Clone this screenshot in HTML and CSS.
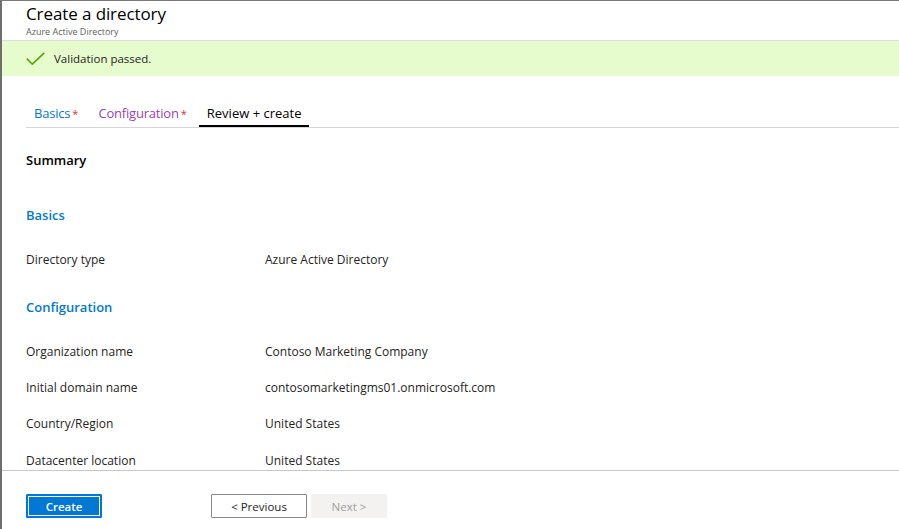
FILE: index.html
```html
<!DOCTYPE html>
<html>
<head>
<meta charset="utf-8">
<link rel="stylesheet" href="styles.css">
</head>
<body>
<div class="frame">
  <header class="header">
    <h1 class="title">Create a directory</h1>
    <div class="subtitle">Azure Active Directory</div>
  </header>
  <div class="banner">
    <svg class="check" width="19" height="14" viewBox="0 0 19 14"><path d="M0.8 6.6 L6.3 12.2 L18.3 0.8" fill="none" stroke="#57a300" stroke-width="1.6"/></svg>
    <span>Validation passed.</span>
  </div>
  <nav class="tabs">
    <a class="tab tab-basics">Basics<span class="star">*</span></a>
    <a class="tab tab-config">Configuration<span class="star">*</span></a>
    <a class="tab tab-active">Review + create</a>
  </nav>
  <main class="content">
    <h2 class="summary">Summary</h2>
    <h3 class="section">Basics</h3>
    <div class="row"><div class="label">Directory type</div><div class="value">Azure Active Directory</div></div>
    <h3 class="section section-config">Configuration</h3>
    <div class="row"><div class="label">Organization name</div><div class="value">Contoso Marketing Company</div></div>
    <div class="row"><div class="label">Initial domain name</div><div class="value">contosomarketingms01.onmicrosoft.com</div></div>
    <div class="row"><div class="label">Country/Region</div><div class="value">United States</div></div>
    <div class="row row-last"><div class="label">Datacenter location</div><div class="value">United States</div></div>
  </main>
  <footer class="footer">
    <button class="btn btn-primary">Create</button>
    <button class="btn btn-default">&lt; Previous</button>
    <button class="btn btn-disabled">Next &gt;</button>
  </footer>
</div>
</body>
</html>
```
FILE: styles.css
```css
* { box-sizing: border-box; }
html, body { margin: 0; padding: 0; background: #fff; }
body {
  font-family: "Open Sans", "Noto Sans", sans-serif;
  color: #252423;
  width: 899px;
  height: 529px;
  overflow: hidden;
}
.frame {
  height: 529px;
  border-top: 1px solid #7a7a7a;
  border-left: 2px solid #6e6e6e;
  display: flex;
  flex-direction: column;
}
.header, .banner, .tabs, .footer { flex-shrink: 0; }
.header {
  height: 40px;
  padding: 3px 0 0 24px;
  border-bottom: 1px solid #dcdcdc;
}
.title {
  margin: 0;
  font-size: 17px;
  font-weight: 400;
  color: #000;
  line-height: 20px;
  letter-spacing: -0.1px;
}
.subtitle {
  font-size: 9px;
  color: #605e5c;
  line-height: 13px;
  margin-top: 1px;
}
.banner {
  height: 35px;
  background: #e6fccc;
  display: flex;
  align-items: center;
  padding-left: 24px;
  font-size: 11.5px;
  color: #252423;
}
.check { margin-right: 9px; margin-top: 1px; }
.tabs {
  margin: 17px 0 0 24px;
  border-bottom: 1px solid #d6d6d6;
  display: flex;
  height: 35px;
}
.tab {
  font-size: 13px;
  line-height: 18px;
  padding: 11px 8px 0;
  margin-right: 4px;
  text-decoration: none;
}
.tab-basics { color: #0078d4; letter-spacing: -0.2px; }
.tab-config { color: #9b3fb2; letter-spacing: -0.2px; }
.star { color: #d13438; font-size: 11px; margin-left: 2px; letter-spacing: 0; }
.tab-active { color: #000; border-bottom: 2px solid #000; }
.content {
  flex: 1;
  min-height: 0;
  padding: 0 0 0 24px;
  overflow: hidden;
}
.summary {
  margin: 23px 0 0;
  font-size: 13px;
  font-weight: 600;
  color: #000;
  line-height: 18px;
}
.section {
  margin: 37px 0 0;
  font-size: 13px;
  font-weight: 600;
  color: #0078d4;
  line-height: 18px;
}
.section-config { margin-top: 29px; }
.row {
  display: flex;
  font-size: 12px;
  line-height: 18px;
  margin-top: 18px;
}
.section + .row { margin-top: 27px; }
.row-last { margin-top: 19px; }
.label { width: 239px; }
.footer {
  height: 59px;
  border-top: 1px solid #c8c8c8;
  display: flex;
  align-items: flex-start;
  padding: 23px 0 0 24px;
}
.btn {
  font-family: inherit;
  font-size: 11.5px;
  height: 24px;
  padding: 0;
  border-radius: 1px;
  cursor: default;
}
.btn-primary {
  width: 76px;
  background: #0078d4;
  color: #fff;
  font-weight: 600;
  border: 1px solid #0078d4;
  outline: 1px solid #fff;
  outline-offset: -3px;
  margin-right: 109px;
}
.btn-default {
  width: 96px;
  background: #fff;
  color: #252423;
  border: 1px solid #8a8886;
  margin-right: 4px;
}
.btn-disabled {
  width: 76px;
  background: #f3f2f1;
  color: #a19f9d;
  border: 1px solid #f3f2f1;
}
```
